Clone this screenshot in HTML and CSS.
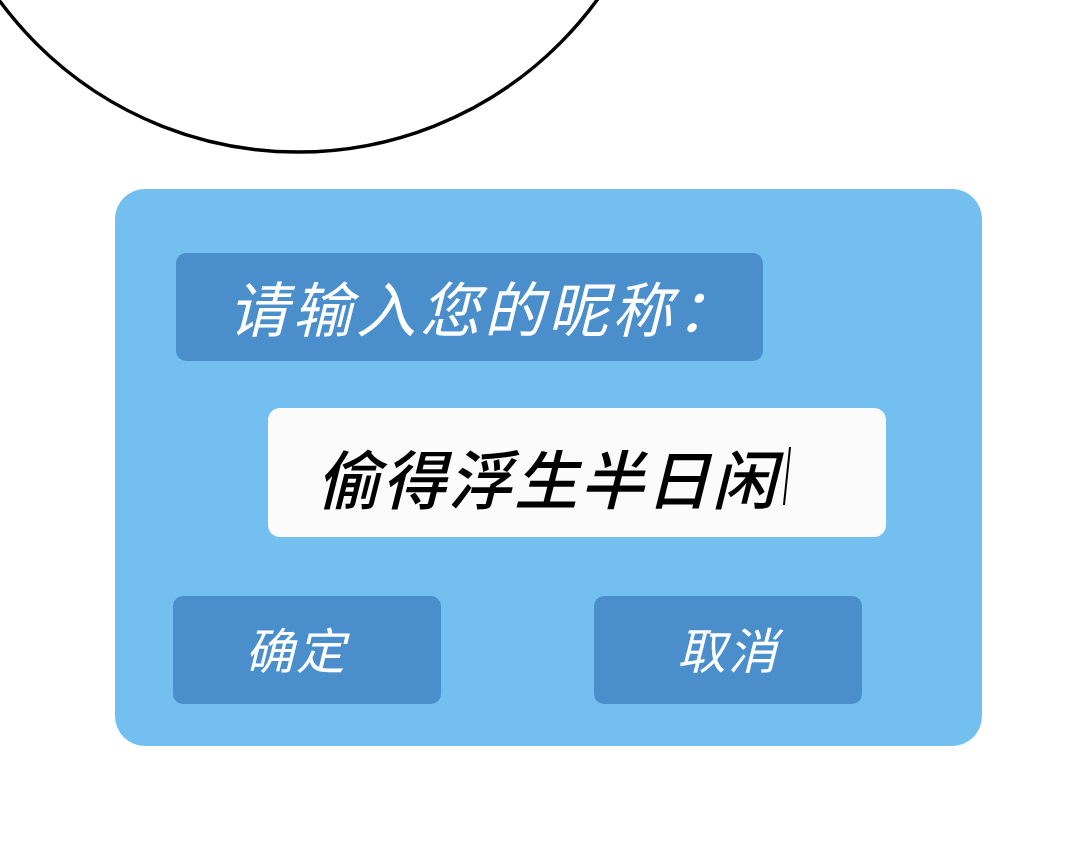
FILE: index.html
```html
<!DOCTYPE html>
<html lang="zh-CN">

<head>
    <meta charset="utf-8">
    <meta name="viewport" content="width=device-width, initial-scale=1.0">
    <title>输入昵称</title>
    <link rel="stylesheet" href="styles.css">
</head>

<body>
    <svg class="moon" width="1080" height="189" viewBox="0 0 1080 189">
        <circle cx="298" cy="-218" r="370" fill="none" stroke="#000" stroke-width="3.5" />
    </svg>

    <div class="dialog">
        <div class="prompt">请输入您的昵称：</div>

        <div class="field">
            <span class="field-text">偷得浮生半日闲</span>
            <span class="caret"></span>
        </div>

        <div class="actions">
            <button class="btn btn-ok">确定</button>
            <button class="btn">取消</button>
        </div>
    </div>
</body>

</html>
```

FILE: styles.css
```css
:root {
    --panel-color: #73bff0;
    --block-color: #4a8ecb;
}

body {
    margin: 0;
    background: #fff;
    font-family: 'Noto Sans CJK SC', 'Noto Sans', sans-serif;
}

.moon {
    display: block;
}

.dialog {
    box-sizing: border-box;
    width: 867px;
    height: 557px;
    margin-left: 115px;
    padding-top: 64px;
    background: var(--panel-color);
    border-radius: 30px;
    display: flex;
    flex-direction: column;
    align-items: flex-start;
}

.prompt {
    box-sizing: border-box;
    width: 587px;
    height: 108px;
    margin-left: 61px;
    padding-left: 52px;
    background: var(--block-color);
    border-radius: 10px;
    color: #fff;
    font-size: 60px;
    font-style: italic;
    letter-spacing: 4px;
    line-height: 106px;
    white-space: nowrap;
}

.field {
    box-sizing: border-box;
    width: 618px;
    height: 129px;
    margin-left: 153px;
    margin-top: 47px;
    padding-left: 48px;
    padding-top: 6px;
    background: #fbfbfb;
    border-radius: 12px;
    display: flex;
    align-items: center;
}

.field-text {
    color: #000;
    font-size: 64px;
    font-weight: 500;
    font-style: italic;
    letter-spacing: 2px;
}

.caret {
    width: 2px;
    height: 58px;
    margin-left: 8px;
    background: #000;
    transform: skewX(-6deg);
}

.actions {
    display: flex;
    gap: 153px;
    margin-top: 59px;
    margin-left: 58px;
}

.btn {
    width: 268px;
    height: 108px;
    border: none;
    border-radius: 10px;
    background: var(--block-color);
    color: #fff;
    font-family: inherit;
    font-size: 49px;
    font-style: italic;
    letter-spacing: 2px;
    padding: 0 0 6px;
}

.btn-ok {
    padding-right: 22px;
}
```
